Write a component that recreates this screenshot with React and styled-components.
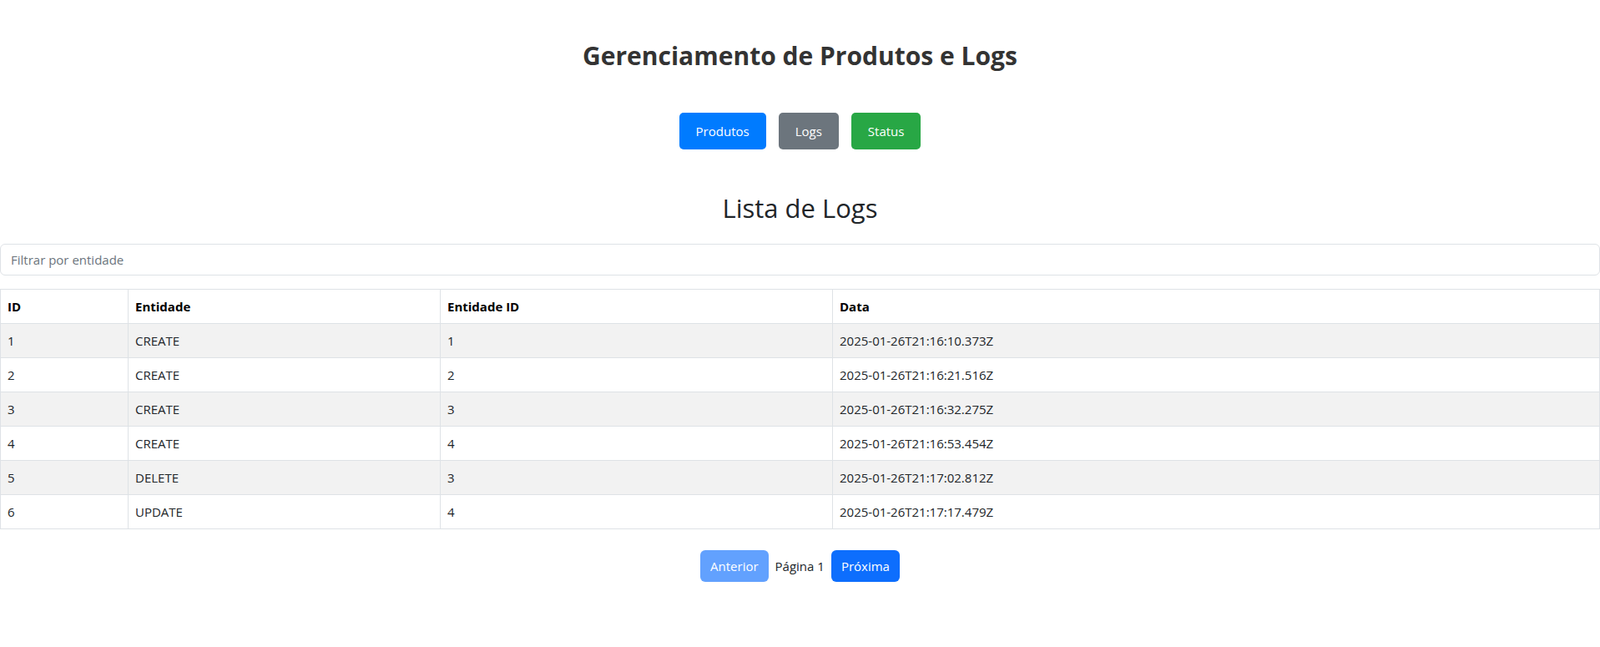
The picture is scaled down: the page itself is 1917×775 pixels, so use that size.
import React, { useState } from 'react';
import styled, { createGlobalStyle } from 'styled-components';

const GlobalStyle = createGlobalStyle`
  body {
    margin: 0;
    background: #fff;
    font-family: 'Open Sans', 'Noto Sans', sans-serif;
    color: #212529;
  }
  * {
    box-sizing: border-box;
  }
`;

const Page = styled.div`
  padding-top: 48px;
`;

const Title = styled.h1`
  margin: 0;
  text-align: center;
  font-size: 30px;
  line-height: 38px;
  font-weight: 700;
  color: #333;
`;

const NavBar = styled.div`
  display: flex;
  justify-content: center;
  gap: 15px;
  margin-top: 49px;
`;

const NavButton = styled.button`
  border: none;
  border-radius: 5px;
  padding: 10px 20px;
  font-family: inherit;
  font-size: 15px;
  line-height: 24px;
  color: #fff;
  background: ${(p) => p.$color};
  cursor: pointer;
`;

const Section = styled.div`
  margin-top: 51px;
`;

const SubTitle = styled.h2`
  margin: 0 0 24px;
  text-align: center;
  font-size: 31px;
  line-height: 38px;
  font-weight: 500;
  color: #212529;
`;

const FilterInput = styled.input`
  display: block;
  width: 100%;
  height: 38px;
  padding: 6px 12px;
  border: 1px solid #dee2e6;
  border-radius: 6px;
  font-family: inherit;
  font-size: 15px;
  color: #212529;
  outline: none;

  &::placeholder {
    color: #6c757d;
  }
`;

const Table = styled.table`
  width: 100%;
  margin-top: 16px;
  border-collapse: collapse;
  table-layout: fixed;
  font-size: 15px;
`;

const HeadCell = styled.th`
  height: 41px;
  padding: 8px;
  border: 1px solid #dee2e6;
  text-align: left;
  font-weight: 700;
  color: #000;
`;

const Row = styled.tr`
  background: ${(p) => (p.$striped ? '#f2f2f2' : '#fff')};
`;

const Cell = styled.td`
  height: 41px;
  padding: 8px;
  border: 1px solid #dee2e6;
  color: #212529;
`;

const Pagination = styled.div`
  display: flex;
  justify-content: center;
  align-items: center;
  gap: 8px;
  margin-top: 25px;
`;

const PageButton = styled.button`
  border: none;
  border-radius: 6px;
  padding: 7px 12px;
  font-family: inherit;
  font-size: 15px;
  line-height: 24px;
  color: #fff;
  background: #0d6efd;
  cursor: pointer;

  &:disabled {
    background: #62a1fe;
    cursor: default;
  }
`;

const PageLabel = styled.span`
  font-size: 15px;
  color: #212529;
`;

const logs = [
  { id: 1, entity: 'CREATE', entityId: 1, date: '2025-01-26T21:16:10.373Z' },
  { id: 2, entity: 'CREATE', entityId: 2, date: '2025-01-26T21:16:21.516Z' },
  { id: 3, entity: 'CREATE', entityId: 3, date: '2025-01-26T21:16:32.275Z' },
  { id: 4, entity: 'CREATE', entityId: 4, date: '2025-01-26T21:16:53.454Z' },
  { id: 5, entity: 'DELETE', entityId: 3, date: '2025-01-26T21:17:02.812Z' },
  { id: 6, entity: 'UPDATE', entityId: 4, date: '2025-01-26T21:17:17.479Z' },
];

function App() {
  const [filter, setFilter] = useState('');
  const [page, setPage] = useState(1);

  const visible = logs.filter((l) =>
    l.entity.toLowerCase().includes(filter.toLowerCase())
  );

  return (
    <Page>
      <GlobalStyle />
      <Title>Gerenciamento de Produtos e Logs</Title>
      <NavBar>
        <NavButton $color='#007bff'>Produtos</NavButton>
        <NavButton $color='#6c757d'>Logs</NavButton>
        <NavButton $color='#28a745'>Status</NavButton>
      </NavBar>

      <Section>
        <SubTitle>Lista de Logs</SubTitle>
        <FilterInput
          type='text'
          placeholder='Filtrar por entidade'
          value={filter}
          onChange={(e) => setFilter(e.target.value)}
        />
        <Table>
          <colgroup>
            <col style={{ width: 153 }} />
            <col style={{ width: 374 }} />
            <col style={{ width: 470 }} />
            <col />
          </colgroup>
          <thead>
            <tr>
              <HeadCell>ID</HeadCell>
              <HeadCell>Entidade</HeadCell>
              <HeadCell>Entidade ID</HeadCell>
              <HeadCell>Data</HeadCell>
            </tr>
          </thead>
          <tbody>
            {visible.map((log, i) => (
              <Row key={log.id} $striped={i % 2 === 0}>
                <Cell>{log.id}</Cell>
                <Cell>{log.entity}</Cell>
                <Cell>{log.entityId}</Cell>
                <Cell>{log.date}</Cell>
              </Row>
            ))}
          </tbody>
        </Table>
        <Pagination>
          <PageButton disabled={page === 1} onClick={() => setPage(page - 1)}>
            Anterior
          </PageButton>
          <PageLabel>Página {page}</PageLabel>
          <PageButton onClick={() => setPage(page + 1)}>Próxima</PageButton>
        </Pagination>
      </Section>
    </Page>
  );
}

export default App;
